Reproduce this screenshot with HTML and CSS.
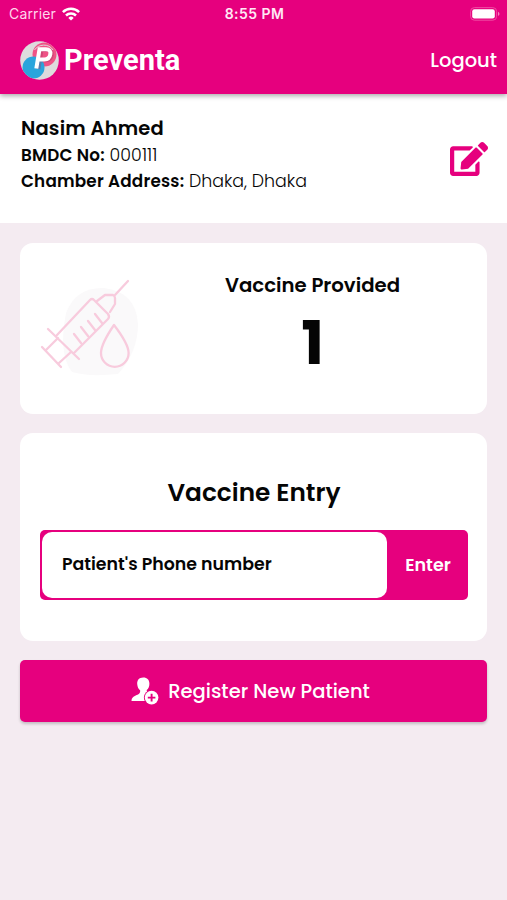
FILE: index.html
```html
<!DOCTYPE html>
<html lang="en">
<head>
<meta charset="utf-8">
<meta name="viewport" content="width=device-width">
<title>Preventa</title>
<link rel="stylesheet" href="styles.css">
</head>
<body>
<header class="header">
  <div class="status">
    <div class="carrier"><span>Carrier</span>
      <svg width="18" height="14" viewBox="0 0 18 14" fill="none" stroke="#fff" stroke-width="2.5"><path d="M.9 5.1a11.5 11.5 0 0 1 16.2 0M4 8.5a7.2 7.2 0 0 1 10 0"/><path d="M9 13.6 6.3 10.9a3.9 3.9 0 0 1 5.4 0z" fill="#fff" stroke="none"/></svg>
    </div>
    <span class="time">8:55 PM</span>
    <svg class="battery" width="30" height="14" viewBox="0 0 30 14"><rect x=".6" y=".6" width="26" height="12.6" rx="3.8" fill="none" stroke="#f04ba3"/><rect x="2.2" y="2.3" width="22.6" height="9.2" rx="2.2" fill="#fff"/><path d="M28 4.7q3 2.2 0 4.4z" fill="#f583bf"/></svg>
  </div>
  <div class="navbar">
    <div class="brand">
      <svg width="39" height="39" viewBox="0 0 39 39"><defs><clipPath id="disc"><circle cx="19.5" cy="19.5" r="19.3"/></clipPath></defs><g clip-path="url(#disc)"><path fill="#dedbdd" d="M0 0h39v39H0z"/><circle cx="24.500" cy="13.500" r="12" fill="#ef5386"/><circle cx="13.500" cy="26.500" r="11" fill="#2aa5dc"/><path d="M14.500 9C18 3 29 2 33 9" fill="none" stroke="#dedbdd" stroke-width="1"/><path d="m18.500 28 3-19h6q5 0 4.300 5t-5.800 5.200h-6" fill="none" stroke="#a23a62" stroke-width="4" opacity=".4"/><path d="m16.300 27.500 3.200-19.300h6.500q5 0 4.300 5t-6 5.200h-6.200" fill="none" stroke="#fff" stroke-width="4"/></g></svg>
      <span class="wordmark">Preventa</span>
    </div>
    <span class="logout">Logout</span>
  </div>
</header>
<section class="profile">
  <div>
    <div class="name">Nasim Ahmed</div>
    <div class="detail"><b class="detail-label">BMDC No:</b> <span class="number">000111</span></div>
    <div class="detail"><b class="detail-label">Chamber Address:</b> <span class="place">Dhaka, Dhaka</span></div>
  </div>
  <svg class="edit" width="38" height="34" viewBox="0 0 576 512" fill="#e6007e"><path d="M402.600 83.200l90.200 90.200c3.800 3.800 3.800 10 0 13.800L274.400 405.600l-92.800 10.300c-12.400 1.400-22.900-9.100-21.500-21.500l10.300-92.800L388.800 83.200c3.800-3.800 10-3.800 13.800 0zm162-22.900l-48.800-48.800c-15.200-15.200-39.900-15.200-55.200 0l-35.400 35.400c-3.800 3.800-3.800 10 0 13.800l90.200 90.200c3.800 3.800 10 3.800 13.800 0l35.400-35.400c15.200-15.300 15.200-40 0-55.200zM384 346.200V448H64V128h229.800c3.200 0 6.200-1.300 8.500-3.500l40-40c7.600-7.600 2.200-20.500-8.500-20.500H48C21.500 64 0 85.500 0 112v352c0 26.500 21.500 48 48 48h352c26.500 0 48-21.500 48-48V306.200c0-10.700-12.900-16-20.500-8.500l-40 40c-2.200 2.300-3.500 5.300-3.500 8.500z"/></svg>
</section>
<main class="content">
  <section class="card summary">
    <svg class="syringe" width="110" height="110" viewBox="0 0 110 110" fill="none" stroke="#f8cbdd" stroke-width="2.3" stroke-linecap="round" stroke-linejoin="round">
      <path d="M26 44Q36 18 64 19q32 4 34 36 0 28-20 50-30 3-46-2-14-18-6-59z" fill="#faf9fa" stroke="none"/>
      <path d="m88 12-13 14M57 32l8-6h8q2 1 2 3v6l-5 8M17 66 50 31q2-2 4 0l14 14q2 3 0 5L34 84M8 60l31 30M2 78l19 20M6 81l12-12M19 94l12-11M34 65l7 9M41 58l7 9M48 52l7 9M55 45l7 9"/>
      <path d="M74 56Q61 75 61 84a13.800 13.800 0 0 0 27.600 0Q88.600 75 74 56z"/>
    </svg>
    <div class="count"><div class="count-label">Vaccine Provided</div><div class="count-value">1</div></div>
  </section>
  <section class="card entry">
    <h2 class="entry-title">Vaccine Entry</h2>
    <div class="phone"><div class="phone-field"><span>Patient's Phone number</span></div><div class="enter"><span>Enter</span></div></div>
  </section>
  <div class="register">
    <svg width="28" height="28" viewBox="0 0 28 28" fill="#fff"><path d="M12.200.5C8 .5 6 3.300 6.200 7c.2 3 1.400 5.200 3 6.500 0 2.300-.5 3.200-2.700 4.300C2.500 19.500.5 20.500.5 24H14c-1.500-4 .5-7 4-8.200-2-.7-2.400-1.500-2.300-2.700 1.700-1.500 2.700-3.500 2.700-6.400C18.400 2.900 16.300.5 12.200.5z"/><circle cx="20.600" cy="20.600" r="7.700" fill="#e6007e"/><circle cx="20.600" cy="20.600" r="6.800"/><path d="M20.600 16.800v7.600M16.800 20.600h7.600" stroke="#e6007e" stroke-width="1.900"/></svg>
    <span>Register New Patient</span>
  </div>
</main>
</body>
</html>
```
FILE: styles.css
```css
* { box-sizing: border-box; }
body { margin: 0; min-height: 900px; background: #f4ebf1; color: #050505; font-family: Poppins, Inter, sans-serif; }
svg { display: block; flex: none; }
span { white-space: nowrap; }
.header { position: relative; height: 94px; background: #e6007e; color: #fff; box-shadow: 0 2px 5px #0005; }
.status { height: 27px; padding: 0 7px 0 9px; display: grid; grid-template-columns: 1fr auto 1fr; align-items: center; font-family: Inter, sans-serif; }
.carrier { display: flex; gap: 6px; align-items: center; font-size: 14px; color: #ffd6ec; letter-spacing: .15px; }
.time { font-weight: 600; font-size: 14px; letter-spacing: .45px; color: #ffe9f5; }
.battery { justify-self: end; }
.navbar { height: 67px; padding: 0 10px 0 20px; display: flex; justify-content: space-between; align-items: center; }
.brand { display: flex; align-items: center; gap: 5px; }
.wordmark { margin-top: -2px; font: bold 29px/40px Roboto, sans-serif; }
.logout { font-size: 19.500px; font-weight: 500; }
.profile { height: 129px; padding: 21px 19px 0 21px; background: #fff; display: flex; justify-content: space-between; }
.name { font-size: 19.500px; line-height: 27px; font-weight: 600; letter-spacing: .15px; }
.detail { font-size: 16.800px; line-height: 26px; font-weight: 300; }
.detail-label { font-weight: 600; letter-spacing: .2px; }
.number { font-size: 17.400px; letter-spacing: .1px; }
.place { font-size: 17.400px; }
.edit { margin-top: 27px; }
.content { padding: 20px 20px 0; display: flex; flex-direction: column; gap: 19px; }
.card { background: #fff; border-radius: 13px; }
.summary { height: 171px; padding: 26px 12px 26px 20px; display: flex; }
.count { flex: 1; padding-top: 1px; text-align: center; }
.count-label { font-size: 19.700px; line-height: 30px; font-weight: 600; }
.count-value { font-size: 60.500px; line-height: 86px; font-weight: 700; }
.entry { height: 208px; padding: 41px 19px 0 20px; }
.entry-title { margin: 0; font-size: 24.800px; line-height: 38px; font-weight: 600; text-align: center; }
.phone { height: 70px; margin-top: 18px; padding: 2px; display: flex; background: #e6007e; border-radius: 5px; }
.phone-field { width: 345px; padding: 0 0 3px 20px; display: flex; align-items: center; background: #fff; border-radius: 10px; font-size: 17.350px; font-weight: 600; }
.enter { flex: 1; padding-left: 3px; display: flex; align-items: center; justify-content: center; color: #fff; font-size: 17.500px; font-weight: 600; }
.register { height: 62px; padding-right: 6px; display: flex; align-items: center; justify-content: center; gap: 9px; border-radius: 5px; color: #fff; background: #e6007e; box-shadow: 0 2px 3px #0003; font-size: 19.550px; font-weight: 500; }
```
